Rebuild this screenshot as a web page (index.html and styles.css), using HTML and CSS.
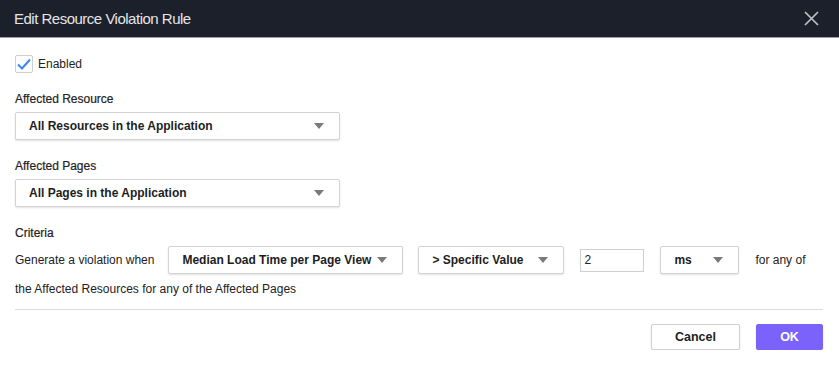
FILE: index.html
```html
<!DOCTYPE html>
<html lang="en">
<head>
    <meta charset="UTF-8">
    <title>Edit Resource Violation Rule</title>
    <link rel="stylesheet" href="styles.css">
</head>
<body>
    <div class="dialog">
        <div class="dialog-header">
            <span class="dialog-title">Edit Resource Violation Rule</span>
            <svg class="close" width="15" height="15" viewBox="0 0 15 15">
                <path d="M1 1 L14 14 M14 1 L1 14" stroke="#bfc1c5" stroke-width="1.7" fill="none"/>
            </svg>
        </div>

        <div class="dialog-body">
            <label class="check-row">
                <span class="checkbox">
                    <svg width="14" height="12" viewBox="0 0 14 12">
                        <path d="M1 6.5 L5 10.5 L13 1.5" stroke="#3b87f5" stroke-width="2" fill="none"/>
                    </svg>
                </span>
                Enabled
            </label>

            <div class="field-label">Affected Resource</div>
            <div class="select wide">
                <span>All Resources in the Application</span>
                <i class="caret"></i>
            </div>

            <div class="field-label">Affected Pages</div>
            <div class="select wide">
                <span>All Pages in the Application</span>
                <i class="caret"></i>
            </div>

            <div class="field-label">Criteria</div>
            <div class="criteria-row">
                <span>Generate a violation when</span>
                <div class="select metric">
                    <span>Median Load Time per Page View</span>
                    <i class="caret"></i>
                </div>
                <div class="select operator">
                    <span>&gt; Specific Value</span>
                    <i class="caret"></i>
                </div>
                <input class="value-input" type="text" value="2">
                <div class="select unit">
                    <span>ms</span>
                    <i class="caret"></i>
                </div>
                <span>for any of</span>
            </div>
            <div class="criteria-tail">the Affected Resources for any of the Affected Pages</div>

            <div class="divider"></div>

            <div class="dialog-footer">
                <button class="btn">Cancel</button>
                <button class="btn primary">OK</button>
            </div>
        </div>
    </div>
</body>
</html>
```

FILE: styles.css
```css
body {
    margin: 0;
    font-family: 'Liberation Sans', Arial, sans-serif;
    background: #fff;
    color: #222;
}
.dialog {
    width: 839px;
}
.dialog-header {
    height: 38px;
    background-color: #1c202b;
    border-bottom: 1px solid #9da0a6;
    display: flex;
    align-items: center;
    justify-content: space-between;
    padding: 0 20px 0 14px;
    box-sizing: border-box;
}
.dialog-title {
    color: #e4e5e7;
    font-size: 15px;
    letter-spacing: -0.5px;
}
.close {
    display: block;
}
.dialog-body {
    padding: 0 16px 0 15px;
}
.check-row {
    display: flex;
    align-items: center;
    gap: 5px;
    margin-top: 17px;
    height: 18px;
    font-size: 12px;
    color: #222;
}
.checkbox {
    width: 18px;
    height: 18px;
    box-sizing: border-box;
    border: 1px solid #cfcfcf;
    border-radius: 2px;
    display: flex;
    align-items: center;
    justify-content: center;
}
.field-label {
    font-size: 12px;
    line-height: 16px;
    margin-top: 18px;
    color: #222;
    -webkit-text-stroke: 0.2px #222;
}
.select {
    height: 28px;
    box-sizing: border-box;
    border: 1px solid #d3d3d3;
    border-radius: 2px;
    box-shadow: 0 1px 2px rgba(0,0,0,0.12);
    background: #fff;
    display: flex;
    align-items: center;
    justify-content: space-between;
    padding: 0 15px 0 13px;
    font-size: 12px;
    font-weight: bold;
    color: #1d1d1d;
    white-space: nowrap;
}
.select.wide {
    width: 325px;
    margin-top: 5px;
}
.caret {
    width: 0;
    height: 0;
    border-left: 5px solid transparent;
    border-right: 5px solid transparent;
    border-top: 6px solid #7a7a7a;
}
.field-label + .criteria-row {
    margin-top: 5px;
}
.criteria-row {
    display: flex;
    align-items: center;
    font-size: 12px;
    color: #222;
    height: 28px;
    white-space: nowrap;
}
.criteria-row > span:first-child {
    margin-right: 14px;
}
.select.metric {
    width: 235px;
    padding-right: 15px;
    margin-right: 15px;
}
.select.operator {
    width: 146px;
    padding-right: 15px;
    margin-right: 16px;
}
.value-input {
    width: 64px;
    height: 23px;
    box-sizing: border-box;
    border: 1px solid #cfcfcf;
    font-family: 'Liberation Sans', Arial, sans-serif;
    font-size: 12px;
    padding: 2px 3px;
    margin-right: 16px;
    color: #222;
}
.select.unit {
    width: 79px;
    padding-right: 15px;
    margin-right: 16px;
}
.criteria-tail {
    font-size: 12px;
    line-height: 16px;
    margin-top: 7px;
    color: #222;
}
.divider {
    border-top: 1px solid #dcdcdc;
    margin-top: 12px;
}
.dialog-footer {
    display: flex;
    justify-content: flex-end;
    gap: 16px;
    margin-top: 14px;
}
.btn {
    height: 26px;
    width: 89px;
    border: 1px solid #d0d0d0;
    border-radius: 2px;
    box-shadow: 0 1px 2px rgba(0,0,0,0.12);
    background: #fff;
    font-family: 'Liberation Sans', Arial, sans-serif;
    font-size: 12.5px;
    font-weight: bold;
    color: #222;
    cursor: pointer;
}
.btn.primary {
    width: 67px;
    background-color: #7a62fb;
    border-color: #7a62fb;
    color: #fff;
}
```
